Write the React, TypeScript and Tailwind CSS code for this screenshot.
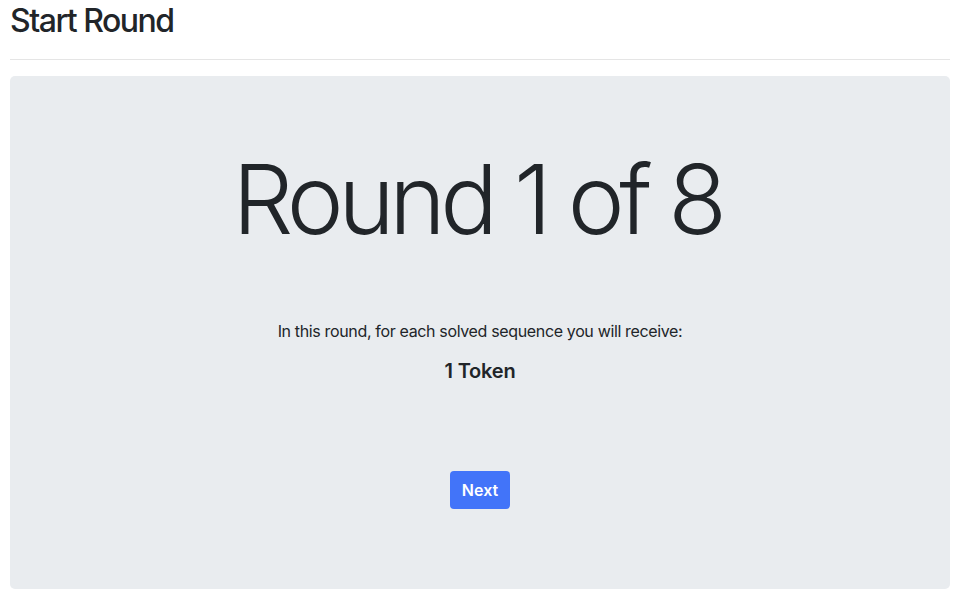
export default function App() {
  return (
    <div className="min-h-screen bg-white px-[10px] pt-[2px] text-[#212529] font-['Inter','Liberation_Sans',sans-serif]">
      <div className="w-[940px]">
        <h2 className="text-[32px] font-medium leading-[1.2] tracking-[-1.5px]">Start Round</h2>
        <hr className="mt-[19px] mb-[16px] border-t border-[#e5e5e5]" />

        <div className="flex flex-col items-center rounded-[5px] bg-[#e9ecef] pt-[66px] pb-[80px]">
          <h1 className="pr-[6px] text-[96px] font-light leading-[1.2] tracking-[-5.5px]">
            Round 1 of 8
          </h1>
          <p className="mt-[61px] text-[16px] leading-[24px] tracking-[-0.35px]">
            In this round, for each solved sequence you will receive:
          </p>
          <h5 className="mt-[16px] text-[20px] font-semibold leading-[24px] tracking-[-0.2px]">
            1 Token
          </h5>
          <button className="mt-[88px] h-[38px] rounded-[4px] bg-[#4274f9] px-[12px] text-[16px] font-semibold text-white">
            Next
          </button>
        </div>
      </div>
    </div>
  );
}
